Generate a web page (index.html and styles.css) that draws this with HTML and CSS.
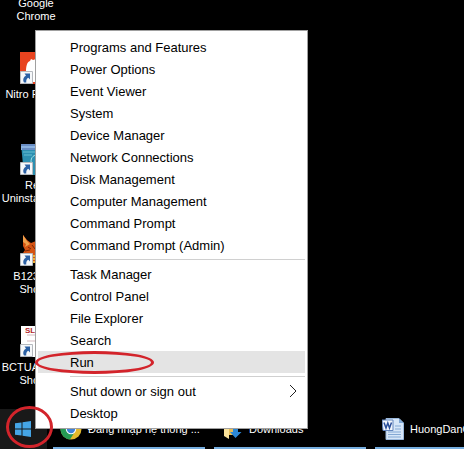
FILE: index.html
```html
<!DOCTYPE html>
<html lang="en">
<head>
<meta charset="utf-8">
<title>Desktop</title>
<link rel="stylesheet" href="styles.css">
</head>
<body>
<svg class="defs" aria-hidden="true">
  <symbol id="arrow" viewBox="0 0 13 13">
    <path d="M.5.5h12v12H.5z" fill="#f6f8fa" stroke="#b5b9be"/>
    <path d="M4.500 2.500H10v6L8.300 6.800C6.500 7.800 6 9.300 6.300 11.500H4C2.500 8.500 3.500 6 6 4.400z" fill="#2c61a5"/>
  </symbol>
</svg>
<main class="desktop">
  <div class="shortcut first"><span class="label">Google<br>Chrome</span></div>
  <div class="shortcut">
    <svg class="pic" viewBox="0 0 16 32" aria-hidden="true">
      <path d="M0 0h16v32H0z" fill="#e8431f"/>
      <path d="M6 20C6 14 7 10 10 9l1-2 2 1 3-1v23h-4V20z" fill="#fff"/>
      <use href="#arrow" y="19" width="13" height="13"/>
    </svg>
    <span class="label">Nitro P</span>
  </div>
  <div class="shortcut">
    <svg class="pic" viewBox="0 0 16 32" aria-hidden="true">
      <path d="M1 1h15v31H4z" fill="#2c8fb0"/>
      <path d="M1 1h15v6H1z" fill="#8bb2e0"/>
      <path d="M1 2h15M2 6h14" stroke="#4669a7" fill="none"/>
      <path d="M3 9h13M4 12h8" stroke="#66bed1" fill="none"/>
      <path d="M16 12c-5 1-6 6-4 11" stroke="#a4e3e6" fill="none"/>
      <use href="#arrow" y="19" width="13" height="13"/>
    </svg>
    <span class="label">Re<br>Uninsta</span>
  </div>
  <div class="shortcut">
    <svg class="pic" viewBox="0 0 16 32" aria-hidden="true">
      <path d="M3 1l4 5 4 3 5-2v22h-4V19H3l2-3-2-4z" fill="#d55313"/>
      <path d="M3 1l4 6 3 3-5 3 1-3-3-2z" fill="#efa04b"/>
      <path d="M8 13l3 2M5 17l5-1M12 11l3 4" stroke="#762706"/>
      <path d="M14 21v8" stroke="#efb33a" stroke-width="3" stroke-dasharray="2 1"/>
      <use href="#arrow" y="19" width="13" height="13"/>
    </svg>
    <span class="label">B123<br>Sho</span>
  </div>
  <div class="shortcut">
    <svg class="pic" viewBox="0 0 16 32" aria-hidden="true">
      <path d="M1 1h15v31H1z" fill="#fff"/>
      <path d="M7 10h9M7 16h9" stroke="#d4b9bd"/>
      <text class="badge" x="5" y="8">SL</text>
      <use href="#arrow" y="19" width="13" height="13"/>
    </svg>
    <span class="label">BCTUA<br>Sho</span>
  </div>
</main>

<footer class="taskbar">
  <button class="start" aria-label="Start">
    <svg class="win" viewBox="0 0 17 16" aria-hidden="true">
      <path d="M0 2.300L6.500 1.400V7.500H0zM7.500 1.200L16 0v7.500H7.500zM0 8.500h6.500v6.100L0 13.700zM7.500 8.500H16V16l-8.500-1.200z" fill="#45a5e6"/>
    </svg>
  </button>
  <div class="tasks">
    <button class="task">
      <svg class="ico" viewBox="0 0 22 22" aria-hidden="true">
        <circle cx="11" cy="11" r="10.500" fill="#e3b92c"/>
        <path d="M11 11L2 5.500A10.500 10.500 0 0 0 10 21.500l5-8z" fill="#269a54"/>
        <path d="M2 5.500A10.500 10.500 0 0 1 20.500 6.500H11z" fill="#dc4437"/>
        <circle cx="11" cy="11" r="5.200" fill="#fff"/>
        <circle cx="11" cy="11" r="4.200" fill="#3e82d8"/>
      </svg>
      <span>Đang nhập hệ thống ...</span>
    </button>
    <button class="task">
      <svg class="ico" viewBox="0 0 22 22" aria-hidden="true">
        <path d="M3 2h12v15H3z" fill="#e7bd57"/>
        <path d="M3 2l5 3v16l-5-3z" fill="#fae29a"/>
        <path d="M12 8h5v6h3.500L14.500 20 9 14h3z" fill="#2c87d5"/>
      </svg>
      <span>Downloads</span>
    </button>
    <button class="task">
      <svg class="ico" viewBox="0 0 22 22" aria-hidden="true">
        <path d="M4 .5h13l4.500 4.500v16.500H4z" fill="#d6e6f8" stroke="#9bb9dc"/>
        <path d="M17 .5V5h4.500z" fill="#7da6d4"/>
        <path d="M13 8h6M13 11h6M6 14h13M6 16.500h13M6 19h13" stroke="#83a8d4"/>
        <path d="M0 2h11v10.500H1z" fill="#f3f7fd" stroke="#6385bd"/>
        <path d="M2 4.500L4 10l1.800-5L7.500 10l2-5.500" fill="none" stroke="#294e9a" stroke-width="1.500"/>
      </svg>
      <span>HuongDanC</span>
    </button>
  </div>
</footer>

<nav class="menu" aria-label="Quick links">
  <button class="item">Programs and Features</button>
  <button class="item">Power Options</button>
  <button class="item">Event Viewer</button>
  <button class="item">System</button>
  <button class="item">Device Manager</button>
  <button class="item">Network Connections</button>
  <button class="item">Disk Management</button>
  <button class="item">Computer Management</button>
  <button class="item">Command Prompt</button>
  <button class="item">Command Prompt (Admin)</button>
  <hr class="rule">
  <button class="item">Task Manager</button>
  <button class="item">Control Panel</button>
  <button class="item">File Explorer</button>
  <button class="item">Search</button>
  <button class="item active">Run</button>
  <hr class="rule">
  <button class="item">Shut down or sign out
    <svg class="chev" viewBox="0 0 8 12" aria-hidden="true"><path d="M1 0l6 6-6 6" fill="none" stroke="#222"/></svg>
  </button>
  <button class="item">Desktop</button>
</nav>
<div class="ring ring-run"></div>
<div class="ring ring-start"></div>
</body>
</html>
```
FILE: styles.css
```css
* { box-sizing: border-box; }
body {
  margin: 0;
  height: 100vh;
  display: flex;
  flex-direction: column;
  position: relative;
  overflow: hidden;
  background: #000;
  color: #fff;
  font: 11px/13px "Liberation Sans", Arial, sans-serif;
}
button {
  margin: 0;
  padding: 0;
  border: 0;
  background: none;
  color: inherit;
  font: inherit;
  text-align: left;
  white-space: nowrap;
}
.defs { position: absolute; width: 0; height: 0; }

.desktop { flex: 1; min-height: 0; }
.shortcut {
  width: 39px;
  height: 91px;
  display: flex;
  flex-direction: column;
  align-items: flex-end;
  gap: 4px;
  text-align: right;
  white-space: nowrap;
}
.shortcut.first {
  width: 72px;
  height: 55px;
  margin-top: -3px;
  align-items: center;
  text-align: center;
}
.pic { width: 16px; height: 32px; flex: none; margin-right: 3px; }
.badge { font: bold 8px "Liberation Sans", Arial, sans-serif; fill: #b3262b; }

.taskbar { display: flex; height: 40px; flex: none; }
.start {
  width: 47px;
  flex: none;
  display: flex;
  align-items: center;
  justify-content: center;
  background: #191919;
}
.win { width: 17px; height: 16px; }
.tasks {
  flex: 1;
  min-width: 0;
  display: flex;
  gap: 9px;
  padding-left: 6px;
  overflow: hidden;
}
.task {
  width: 152px;
  flex: none;
  display: flex;
  align-items: center;
  gap: 6px;
  padding: 2px 0 0 7px;
  border-bottom: 2px solid #76aee0;
}
.ico { width: 22px; height: 22px; flex: none; }

.menu {
  position: absolute;
  left: 35px;
  bottom: 20px;
  width: 273px;
  padding: 5px 2px 4px;
  border: 1px solid #a0a0a0;
  background: #fff;
  color: #000;
  font-size: 13px;
}
.item {
  width: 100%;
  height: 22px;
  display: flex;
  align-items: center;
  justify-content: space-between;
  padding: 0 8px 0 32px;
}
.item.active { background: #e4e4e4; }
.rule {
  height: 1px;
  margin: 3px 0 3px 32px;
  border: 0;
  background: #d0d0d0;
}
.chev { width: 8px; height: 12px; }

.ring {
  position: absolute;
  border: 3px solid #d3242b;
  border-radius: 50%;
  pointer-events: none;
}
.ring-run { left: 35px; bottom: 75px; width: 119px; height: 23px; }
.ring-start { left: 6px; bottom: 1px; width: 47px; height: 42px; }
```
